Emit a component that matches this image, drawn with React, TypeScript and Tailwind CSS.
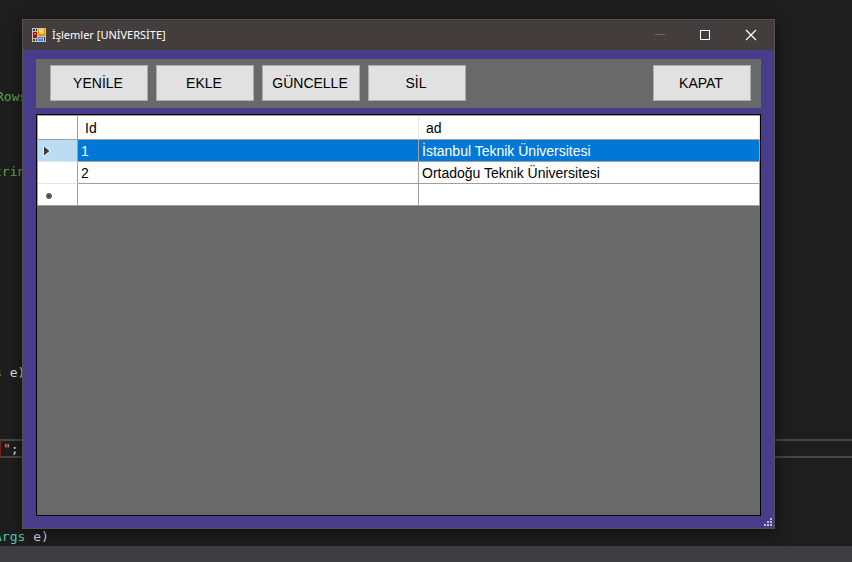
import React, { useState } from "react";

type Row = { id: string; ad: string };

const rows: Row[] = [
  { id: "1", ad: "İstanbul Teknik Üniversitesi" },
  { id: "2", ad: "Ortadoğu Teknik Üniversitesi" },
];

function FormIcon() {
  return (
    <svg width="14" height="14" viewBox="0 0 14 14" shapeRendering="crispEdges" aria-hidden="true">
      <rect width="14" height="14" fill="#c4c2c0" />
      <rect x="1" y="1" width="2" height="2" fill="#3f3b3a" />
      <rect x="4" y="1" width="1" height="2" fill="#3f3b3a" />
      <rect x="6" y="1" width="7" height="7" fill="#d99a10" />
      <rect x="7" y="1" width="5" height="5" fill="#fccb3e" />
      <rect x="7" y="2" width="3" height="2" fill="#ffe58c" />
      <rect x="1" y="4" width="4" height="6" fill="#a51510" />
      <rect x="2" y="5" width="2" height="2" fill="#e8503c" />
      <rect x="1" y="11" width="2" height="2" fill="#3f3b3a" />
      <rect x="4" y="11" width="1" height="2" fill="#3f3b3a" />
      <rect x="6" y="9" width="5" height="4" fill="#4a86e0" />
      <rect x="7" y="10" width="3" height="1" fill="#9cc4fb" />
      <rect x="12" y="9" width="1" height="4" fill="#3f3b3a" />
    </svg>
  );
}

function ToolButton({ children }: { children: string }) {
  return (
    <button
      type="button"
      className="h-9 w-[98px] shrink-0 border border-[#adadad] bg-[#e1e1e1] pr-0.5 text-center text-sm text-black"
    >
      {children}
    </button>
  );
}

function CodeBackground() {
  return (
    <div
      aria-hidden="true"
      className="flex h-full flex-col bg-[#1e1e1e] font-['DejaVu_Sans_Mono',monospace] text-[13px] leading-4 whitespace-pre text-[#dcdcdc]"
    >
      <div className="mt-[89px] -ml-1 text-[#57a64a]">Rows</div>
      <div className="mt-[59px] -ml-1.5 text-[#57a64a]">trin</div>
      <div className="mt-[185px] -ml-1.5">
        <span className="text-[#4ec9b0]">s</span> e)
      </div>
      <div className="mt-[58px] flex h-[19px] items-center border-y-2 border-[#464646]">
        <span className="mr-0.5 h-4 w-px bg-[#7a1f1a]" />
        <span className="text-[#d69d85]">"</span>;
      </div>
      <div className="mt-[71px] -ml-1.5">
        <span className="text-[#4ec9b0]">Args</span> e)
      </div>
      <div className="mt-auto h-4 bg-[#3e3e42]" />
    </div>
  );
}

function TitleBar() {
  return (
    <header className="flex h-[30px] shrink-0 items-center bg-[#433e3d] pr-[17px] pl-[9px] text-white">
      <FormIcon />
      <h1 className="ml-1.5 flex-1 font-['Noto_Sans',sans-serif] text-[11px] leading-4">İşlemler [UNİVERSİTE]</h1>
      <div className="flex items-center gap-[34px]">
        <button type="button" disabled aria-label="Simge durumuna küçült">
          <svg className="block" width="12" height="12" viewBox="0 0 12 12" shapeRendering="crispEdges">
            <path d="M2 5.5H12" stroke="#6d6968" />
          </svg>
        </button>
        <button type="button" aria-label="Ekranı kapla">
          <svg className="block" width="12" height="12" viewBox="0 0 12 12" shapeRendering="crispEdges">
            <rect x="1.5" y="1.5" width="9" height="9" fill="none" stroke="#fff" />
          </svg>
        </button>
        <button type="button" aria-label="Kapat">
          <svg className="block" width="12" height="12" viewBox="0 0 12 12">
            <path d="M1 1L11 11M11 1L1 11" stroke="#fff" strokeWidth="1.3" />
          </svg>
        </button>
      </div>
    </header>
  );
}

function DataGrid() {
  const [selected, setSelected] = useState(0);
  const cell = "h-[22px] border-r border-b border-[#a0a0a0] px-[3px] text-left";
  const rowHeader = "h-[22px] border-r border-r-[#a0a0a0] border-b border-b-[#e5e5e5] pl-[5px]";
  const header = "h-6 border-r border-b border-r-[#e5e5e5] border-b-[#a0a0a0] px-[7px] text-left font-normal";
  return (
    <div className="min-h-0 flex-1 border border-black bg-[#696969]">
      <table className="w-full table-fixed border-separate border-spacing-0 border-t border-l border-[#a0a0a0] bg-white text-sm leading-4 text-black">
        <colgroup>
          <col className="w-10" />
          <col />
          <col />
        </colgroup>
        <thead>
          <tr>
            <td className="h-6 border-r border-b border-[#a0a0a0]" />
            <th scope="col" className={header}>
              Id
            </th>
            <th scope="col" className={header}>
              ad
            </th>
          </tr>
        </thead>
        <tbody>
          {rows.map((row, i) => {
            const active = i === selected;
            return (
              <tr key={row.id} onClick={() => setSelected(i)} className={active ? "bg-[#0078d7] text-white" : "bg-white"}>
                <td className={`${rowHeader} ${active ? "bg-[#bcdcf4]" : "bg-white"}`}>
                  {active && (
                    <svg className="block" width="8" height="12" viewBox="0 0 8 12" aria-hidden="true">
                      <path d="M0 0L8 6L0 12Z" fill="#eef6fc" />
                      <path d="M1 1.5L6.5 6L1 10.5Z" fill="#3c3c3c" />
                    </svg>
                  )}
                </td>
                <td className={cell}>{row.id}</td>
                <td className={cell}>{row.ad}</td>
              </tr>
            );
          })}
          <tr>
            <td className="h-[22px] border-r border-b border-[#a0a0a0] pt-0.5 pl-[7px]">
              <svg className="block" width="8" height="8" viewBox="0 0 8 8" aria-hidden="true">
                <circle cx="4" cy="4" r="3" fill="#8c8c8c" />
                <path d="M4 1V7M1 4H7M2 2L6 6M6 2L2 6" stroke="#404040" />
              </svg>
            </td>
            <td className={cell} />
            <td className={cell} />
          </tr>
        </tbody>
      </table>
    </div>
  );
}

function SizeGrip() {
  return (
    <svg
      className="absolute right-0.5 bottom-0.5"
      width="8"
      height="8"
      viewBox="0 0 8 8"
      fill="#c0c0c0"
      shapeRendering="crispEdges"
      aria-hidden="true"
    >
      <path d="M6 0h2v2h-2zM3 3h2v2h-2zM6 3h2v2h-2zM0 6h2v2h-2zM3 6h2v2h-2zM6 6h2v2h-2z" />
    </svg>
  );
}

export default function App() {
  return (
    <div className="relative h-screen overflow-hidden font-['Liberation_Sans',Arial,sans-serif]">
      <CodeBackground />
      <main className="absolute top-[19px] right-[77px] bottom-[33px] left-[22px] flex flex-col border border-[#545150] bg-[#483d8b] shadow-[0_4px_14px_rgba(0,0,0,0.5)]">
        <TitleBar />
        <div className="flex min-h-0 flex-1 flex-col gap-1.5 px-[13px] pt-[9px] pb-3">
          <div className="flex justify-between bg-[#696969] pt-1.5 pr-2.5 pb-[7px] pl-3.5">
            <div className="flex gap-2">
              <ToolButton>YENİLE</ToolButton>
              <ToolButton>EKLE</ToolButton>
              <ToolButton>GÜNCELLE</ToolButton>
              <ToolButton>SİL</ToolButton>
            </div>
            <ToolButton>KAPAT</ToolButton>
          </div>
          <DataGrid />
        </div>
        <SizeGrip />
      </main>
    </div>
  );
}
